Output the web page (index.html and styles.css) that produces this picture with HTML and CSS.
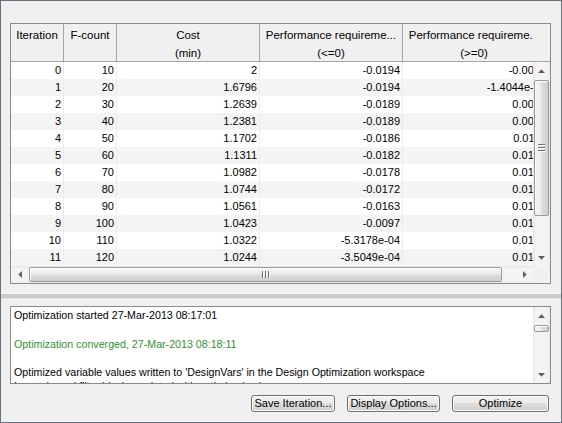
FILE: index.html
```html
<!DOCTYPE html>
<html>
<head>
<meta charset="utf-8">
<link rel="stylesheet" href="styles.css">
</head>
<body>
<div class="window">
  <div class="grid">
    <div class="ghead">
      <div class="gh-clip">
        <div class="cols">
          <div class="hc"><span>Iteration</span></div>
          <div class="hc"><span>F-count</span></div>
          <div class="hc"><span>Cost</span><span>(min)</span></div>
          <div class="hc"><span>Performance requireme...</span><span>(&lt;=0)</span></div>
          <div class="hc"><span>Performance requireme...</span><span>(&gt;=0)</span></div>
        </div>
      </div>
      <div class="gh-corner"></div>
    </div>
    <div class="gbody">
      <div class="viewport">
        <div class="cols row"><div class="c">0</div><div class="c">10</div><div class="c">2</div><div class="c">-0.0194</div><div class="c">-0.0012</div></div>
        <div class="cols row"><div class="c">1</div><div class="c">20</div><div class="c">1.6796</div><div class="c">-0.0194</div><div class="c">-1.4044e-04</div></div>
        <div class="cols row"><div class="c">2</div><div class="c">30</div><div class="c">1.2639</div><div class="c">-0.0189</div><div class="c">0.0031</div></div>
        <div class="cols row"><div class="c">3</div><div class="c">40</div><div class="c">1.2381</div><div class="c">-0.0189</div><div class="c">0.0038</div></div>
        <div class="cols row"><div class="c">4</div><div class="c">50</div><div class="c">1.1702</div><div class="c">-0.0186</div><div class="c">0.0112</div></div>
        <div class="cols row"><div class="c">5</div><div class="c">60</div><div class="c">1.1311</div><div class="c">-0.0182</div><div class="c">0.0125</div></div>
        <div class="cols row"><div class="c">6</div><div class="c">70</div><div class="c">1.0982</div><div class="c">-0.0178</div><div class="c">0.0133</div></div>
        <div class="cols row"><div class="c">7</div><div class="c">80</div><div class="c">1.0744</div><div class="c">-0.0172</div><div class="c">0.0141</div></div>
        <div class="cols row"><div class="c">8</div><div class="c">90</div><div class="c">1.0561</div><div class="c">-0.0163</div><div class="c">0.0150</div></div>
        <div class="cols row"><div class="c">9</div><div class="c">100</div><div class="c">1.0423</div><div class="c">-0.0097</div><div class="c">0.0163</div></div>
        <div class="cols row"><div class="c">10</div><div class="c">110</div><div class="c">1.0322</div><div class="c">-5.3178e-04</div><div class="c">0.0171</div></div>
        <div class="cols row"><div class="c">11</div><div class="c">120</div><div class="c">1.0244</div><div class="c">-3.5049e-04</div><div class="c">0.0178</div></div>
      </div>
      <div class="vscroll">
        <div class="sb-btn"><svg width="7" height="4" viewBox="0 0 7 4"><polygon points="0,4 3.5,0.3 7,4" fill="#5e5e5e"/></svg></div>
        <div class="track">
          <div class="thumb-v big">
            <svg width="7" height="8" viewBox="0 0 7 8"><rect x="0" y="0" width="7" height="1" fill="#707070"/><rect x="0" y="1" width="7" height="1" fill="#fbfbfb"/><rect x="0" y="3" width="7" height="1" fill="#707070"/><rect x="0" y="4" width="7" height="1" fill="#fbfbfb"/><rect x="0" y="6" width="7" height="1" fill="#707070"/><rect x="0" y="7" width="7" height="1" fill="#fbfbfb"/></svg>
          </div>
        </div>
        <div class="sb-btn"><svg width="7" height="4" viewBox="0 0 7 4"><polygon points="0,0 3.5,3.7 7,0" fill="#5e5e5e"/></svg></div>
      </div>
    </div>
    <div class="gfoot">
      <div class="hscroll">
        <div class="sb-btn-h"><svg width="4" height="7" viewBox="0 0 4 7"><polygon points="4,0 0.3,3.5 4,7" fill="#5e5e5e"/></svg></div>
        <div class="track-h">
          <div class="thumb-h">
            <svg width="8" height="7" viewBox="0 0 8 7"><rect x="0" y="0" width="1" height="7" fill="#707070"/><rect x="1" y="0" width="1" height="7" fill="#fbfbfb"/><rect x="3" y="0" width="1" height="7" fill="#707070"/><rect x="4" y="0" width="1" height="7" fill="#fbfbfb"/><rect x="6" y="0" width="1" height="7" fill="#707070"/><rect x="7" y="0" width="1" height="7" fill="#fbfbfb"/></svg>
          </div>
        </div>
        <div class="sb-btn-h"><svg width="4" height="7" viewBox="0 0 4 7"><polygon points="0,0 3.7,3.5 0,7" fill="#5e5e5e"/></svg></div>
      </div>
      <div class="corner"></div>
    </div>
  </div>

  <div class="splitter"></div>

  <div class="log">
    <div class="log-text">
      <p>Optimization started 27-Mar-2013 08:17:01</p>
      <p></p>
      <p class="ok">Optimization converged, 27-Mar-2013 08:18:11</p>
      <p></p>
      <p>Optimized variable values written to 'DesignVars' in the Design Optimization workspace</p>
      <p>Loop-shaped filter blocks updated with optimized values</p>
    </div>
    <div class="vscroll log-scroll">
      <div class="sb-btn"><svg width="7" height="4" viewBox="0 0 7 4"><polygon points="0,4 3.5,0.3 7,4" fill="#5e5e5e"/></svg></div>
      <div class="track">
        <div class="thumb-v small"></div>
      </div>
      <div class="sb-btn"><svg width="7" height="4" viewBox="0 0 7 4"><polygon points="0,0 3.5,3.7 7,0" fill="#5e5e5e"/></svg></div>
    </div>
  </div>

  <div class="buttons">
    <button class="btn save">Save Iteration...</button>
    <button class="btn display">Display Options...</button>
    <button class="btn optimize">Optimize</button>
  </div>
</div>
</body>
</html>
```

FILE: styles.css
```css
* { box-sizing: border-box; }
html, body { margin: 0; padding: 0; }
body {
  width: 562px;
  height: 423px;
  overflow: hidden;
  font-family: "Liberation Sans", Arial, sans-serif;
  color: #000;
}
.window {
  width: 562px;
  height: 423px;
  border: 1px solid #66717d;
  background: #f0f0f0;
  display: flex;
  flex-direction: column;
}

/* ---------- result grid ---------- */
.grid {
  margin: 22px 10px 0 9px;
  height: 261px;
  flex: none;
  border: 1px solid #878b90;
  background: #fff;
  display: flex;
  flex-direction: column;
}
.ghead {
  height: 38px;
  flex: none;
  display: flex;
  background: #f0f0f0;
  border-bottom: 1px solid #a5a5a5;
}
.gh-clip { width: 522px; overflow: hidden; flex: none; }
.gh-corner { flex: 1; }
.cols {
  display: grid;
  grid-template-columns: 53px 53px 143px 143px 143px;
  width: 535px;
}
.hc {
  height: 37px;
  border-right: 1px solid #a5a5a5;
  padding-top: 2px;
  line-height: 18px;
  font-size: 11.5px;
  text-align: center;
  white-space: nowrap;
  overflow: hidden;
}
.hc span { display: block; }

.gbody { height: 204px; flex: none; display: flex; }
.viewport { width: 522px; overflow: hidden; flex: none; }
.row {
  height: 17px;
  grid-template-columns: 53px 53px 143px 143px 146px;
  width: 538px;
}
.row:nth-child(even) { background: #f4f4f4; }
.row .c {
  border-right: 1px solid #ececec;
  text-align: right;
  padding-right: 2px;
  line-height: 17px;
  font-size: 11px;
  white-space: nowrap;
  overflow: hidden;
}

/* ---------- scrollbars ---------- */
.vscroll {
  width: 17px;
  flex: none;
  display: flex;
  flex-direction: column;
  background: linear-gradient(to right, #e6e6e6, #f4f4f4 3px, #f4f4f4 13px, #ebebeb);
}
.sb-btn {
  height: 17px;
  flex: none;
  display: flex;
  align-items: center;
  justify-content: center;
}
.track {
  flex: 1;
  display: flex;
  flex-direction: column;
  align-items: center;
}
.thumb-v {
  margin-top: 1px;
  width: 15px;
  border: 1px solid #9a9a9a;
  border-radius: 2px;
  background: linear-gradient(to right, #f5f5f5, #ececec 45%, #dcdcdc 55%, #d0d0d0);
  box-shadow: inset 1px 1px 0 #fdfdfd;
  display: flex;
  align-items: center;
  justify-content: center;
}
.thumb-v.big { height: 136px; }
.thumb-v.small { height: 7px; }

.gfoot { height: 17px; flex: none; display: flex; }
.hscroll {
  width: 522px;
  flex: none;
  display: flex;
  background: linear-gradient(to bottom, #e6e6e6, #f4f4f4 3px, #f4f4f4 13px, #ebebeb);
}
.sb-btn-h {
  width: 17px;
  flex: none;
  display: flex;
  align-items: center;
  justify-content: center;
}
.track-h { flex: 1; display: flex; align-items: center; }
.thumb-h {
  margin-left: 1px;
  width: 473px;
  height: 15px;
  border: 1px solid #9a9a9a;
  border-radius: 2px;
  background: linear-gradient(to bottom, #f5f5f5, #ececec 45%, #dcdcdc 55%, #d0d0d0);
  box-shadow: inset 1px 1px 0 #fdfdfd;
  display: flex;
  align-items: center;
  justify-content: center;
}
.corner { flex: 1; background: #f0f0f0; }

/* ---------- splitter ---------- */
.splitter {
  margin-top: 9px;
  height: 6px;
  flex: none;
  border-top: 1px solid #fafafa;
  border-bottom: 1px solid #e2e2e2;
  background: #cbcbcb;
}

/* ---------- log ---------- */
.log {
  margin: 7px 10px 0 9px;
  height: 78px;
  flex: none;
  border: 1px solid #878b90;
  background: #fff;
  display: flex;
}
.log-text {
  flex: 1;
  overflow: hidden;
  padding: 1px 0 0 3px;
  font-size: 8pt;
  line-height: 14.3px;
  white-space: nowrap;
}
.log-text p { margin: 0; height: 14.3px; }
.log-text .ok { color: #2f922f; }
.log-scroll { height: 76px; }

/* ---------- buttons ---------- */
.buttons {
  margin-top: 11px;
  flex: none;
  display: flex;
  justify-content: flex-end;
  gap: 12px;
  padding-right: 12px;
}
.btn {
  height: 17px;
  padding: 0;
  border: 1px solid #707070;
  border-radius: 3px;
  background: linear-gradient(#f2f2f2, #ebebeb 50%, #dddddd 50%, #cfcfcf);
  box-shadow: inset 0 0 0 1px #fbfbfb;
  font-family: "Liberation Sans", Arial, sans-serif;
  font-size: 11px;
  line-height: 15px;
  text-align: center;
  color: #000;
}
.save { width: 84px; }
.display { width: 93px; }
.optimize { width: 97px; }
```
